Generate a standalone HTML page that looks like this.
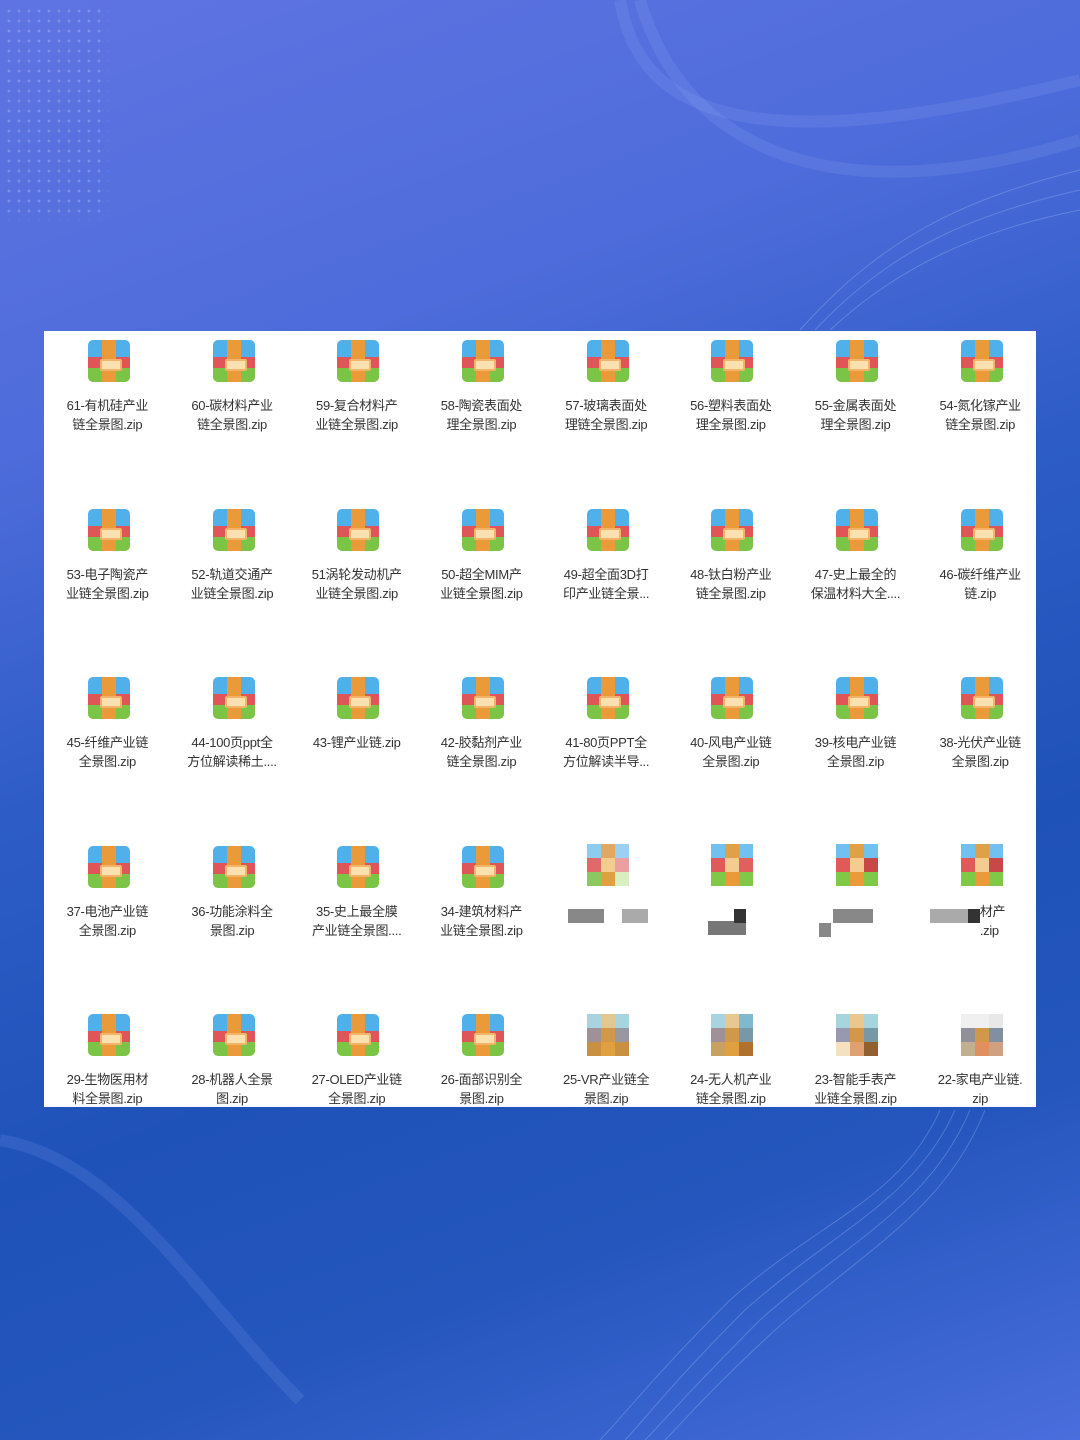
<!DOCTYPE html>
<html><head><meta charset="utf-8">
<style>
*{margin:0;padding:0;box-sizing:border-box}
body{width:1080px;height:1440px;overflow:hidden;position:relative;
background:linear-gradient(160deg,#5f74e2 0%,#4e6cdb 25%,#2d5cc6 45%,#1f52b9 65%,#2456bd 80%,#4a6edd 100%);
font-family:"Liberation Sans","Noto Sans CJK SC",sans-serif}
.dots{position:absolute;left:4px;top:6px;width:104px;height:214px;
background-image:radial-gradient(circle,rgba(255,255,255,.22) 1.2px,transparent 1.6px);background-size:10px 10px}
.panel{position:absolute;left:44px;top:331px;width:992px;height:776px;background:#fff;overflow:hidden;
display:grid;grid-template-columns:repeat(8,124.7px);grid-auto-rows:168.5px;padding-left:1px}
.c{position:relative;text-align:center}
.i{position:absolute;left:43px;top:9px;width:42px;height:42px;border-radius:5px;overflow:hidden;
background:linear-gradient(#4fb0ea 0,#4fb0ea 40%,#e05658 40%,#e05658 67%,#7cc446 67%)}
.i:before{content:"";position:absolute;left:14px;top:0;width:14px;height:42px;background:#eb9a3a}
.i:after{content:"";position:absolute;left:12px;top:19px;width:18px;height:8px;background:#fbe0b0;border:2px solid #f3b46a;border-radius:2px}
.t{position:absolute;left:-10px;right:-10px;top:65px;font-size:13px;line-height:19px;color:#333;letter-spacing:-.3px;white-space:nowrap}
.m{position:absolute;left:43px;top:7px;width:42px;height:42px;display:grid;grid-template-columns:repeat(3,14px)}
.m b{display:block}
.bl{position:absolute;top:72px;height:14px;background:#777}
svg.w{position:absolute;left:0;top:0}
</style></head><body>
<svg class="w" width="1080" height="1440" viewBox="0 0 1080 1440" fill="none">
<g stroke="rgba(170,200,255,.12)" stroke-width="12">
<path d="M620 0 C640 120 760 160 1080 80"/>
<path d="M640 0 C680 140 820 220 1080 140"/>
<path d="M0 1140 C120 1160 200 1300 300 1400"/>
</g>
<g stroke="rgba(200,220,255,.25)" stroke-width="1">
<path d="M800 330 C880 240 960 200 1080 170"/><path d="M815 330 C890 250 970 215 1080 190"/>
<path d="M830 330 C900 265 980 230 1080 210"/>
<path d="M940 1110 C900 1200 820 1220 730 1300 C650 1380 620 1420 600 1440"/>
<path d="M955 1110 C915 1200 835 1230 745 1310 C670 1385 640 1425 625 1440"/>
<path d="M970 1110 C930 1205 850 1240 760 1320 C690 1390 660 1425 645 1440"/>
<path d="M985 1110 C945 1210 865 1250 775 1330 C705 1395 680 1425 665 1440"/>
</g>
</svg>
<div class="dots"></div>
<div class="panel">
<div class="c"><div class="i"></div><div class="t">61-有机硅产业<br>链全景图.zip</div></div>
<div class="c"><div class="i"></div><div class="t">60-碳材料产业<br>链全景图.zip</div></div>
<div class="c"><div class="i"></div><div class="t">59-复合材料产<br>业链全景图.zip</div></div>
<div class="c"><div class="i"></div><div class="t">58-陶瓷表面处<br>理全景图.zip</div></div>
<div class="c"><div class="i"></div><div class="t">57-玻璃表面处<br>理链全景图.zip</div></div>
<div class="c"><div class="i"></div><div class="t">56-塑料表面处<br>理全景图.zip</div></div>
<div class="c"><div class="i"></div><div class="t">55-金属表面处<br>理全景图.zip</div></div>
<div class="c"><div class="i"></div><div class="t">54-氮化镓产业<br>链全景图.zip</div></div>

<div class="c"><div class="i"></div><div class="t">53-电子陶瓷产<br>业链全景图.zip</div></div>
<div class="c"><div class="i"></div><div class="t">52-轨道交通产<br>业链全景图.zip</div></div>
<div class="c"><div class="i"></div><div class="t">51涡轮发动机产<br>业链全景图.zip</div></div>
<div class="c"><div class="i"></div><div class="t">50-超全MIM产<br>业链全景图.zip</div></div>
<div class="c"><div class="i"></div><div class="t">49-超全面3D打<br>印产业链全景...</div></div>
<div class="c"><div class="i"></div><div class="t">48-钛白粉产业<br>链全景图.zip</div></div>
<div class="c"><div class="i"></div><div class="t">47-史上最全的<br>保温材料大全....</div></div>
<div class="c"><div class="i"></div><div class="t">46-碳纤维产业<br>链.zip</div></div>

<div class="c"><div class="i"></div><div class="t">45-纤维产业链<br>全景图.zip</div></div>
<div class="c"><div class="i"></div><div class="t">44-100页ppt全<br>方位解读稀土....</div></div>
<div class="c"><div class="i"></div><div class="t">43-锂产业链.zip</div></div>
<div class="c"><div class="i"></div><div class="t">42-胶黏剂产业<br>链全景图.zip</div></div>
<div class="c"><div class="i"></div><div class="t">41-80页PPT全<br>方位解读半导...</div></div>
<div class="c"><div class="i"></div><div class="t">40-风电产业链<br>全景图.zip</div></div>
<div class="c"><div class="i"></div><div class="t">39-核电产业链<br>全景图.zip</div></div>
<div class="c"><div class="i"></div><div class="t">38-光伏产业链<br>全景图.zip</div></div>

<div class="c"><div class="i"></div><div class="t">37-电池产业链<br>全景图.zip</div></div>
<div class="c"><div class="i"></div><div class="t">36-功能涂料全<br>景图.zip</div></div>
<div class="c"><div class="i"></div><div class="t">35-史上最全膜<br>产业链全景图....</div></div>
<div class="c"><div class="i"></div><div class="t">34-建筑材料产<br>业链全景图.zip</div></div>
<div class="c"><div class="m"><b style="background:#8cccf0"></b><b style="background:#e0a860"></b><b style="background:#9cd0f0"></b><b style="background:#e06a6a"></b><b style="background:#f5cc90"></b><b style="background:#eaa0a0"></b><b style="background:#8cc860"></b><b style="background:#e0a040"></b><b style="background:#d8f0c0"></b></div>
<div class="bl" style="left:24px;width:36px;background:#888"></div><div class="bl" style="left:78px;width:26px;background:#aaa"></div></div>
<div class="c"><div class="m"><b style="background:#70c0f0"></b><b style="background:#e0a048"></b><b style="background:#70c0f0"></b><b style="background:#e05a5a"></b><b style="background:#f5cc90"></b><b style="background:#e06060"></b><b style="background:#80c848"></b><b style="background:#eb9a3a"></b><b style="background:#80c848"></b></div>
<div class="bl" style="left:40px;width:38px;top:84px;background:#777"></div><div class="bl" style="left:66px;width:12px;background:#333"></div></div>
<div class="c"><div class="m"><b style="background:#70c0f0"></b><b style="background:#e0a048"></b><b style="background:#70c0f0"></b><b style="background:#e05a5a"></b><b style="background:#f5cc90"></b><b style="background:#c84848"></b><b style="background:#80c848"></b><b style="background:#eb9a3a"></b><b style="background:#80c848"></b></div>
<div class="bl" style="left:40px;width:40px;background:#888"></div><div class="bl" style="left:26px;width:12px;top:86px;background:#888"></div></div>
<div class="c"><div class="m"><b style="background:#70c0f0"></b><b style="background:#e0a048"></b><b style="background:#70c0f0"></b><b style="background:#e05a5a"></b><b style="background:#f5cc90"></b><b style="background:#c84848"></b><b style="background:#80c848"></b><b style="background:#eb9a3a"></b><b style="background:#80c848"></b></div>
<div class="bl" style="left:12px;width:38px;background:#aaa"></div><div class="bl" style="left:50px;width:12px;background:#333"></div><div class="t" style="left:62px;right:0;text-align:left">材产<br>.zip</div></div>

<div class="c"><div class="i"></div><div class="t">29-生物医用材<br>料全景图.zip</div></div>
<div class="c"><div class="i"></div><div class="t">28-机器人全景<br>图.zip</div></div>
<div class="c"><div class="i"></div><div class="t">27-OLED产业链<br>全景图.zip</div></div>
<div class="c"><div class="i"></div><div class="t">26-面部识别全<br>景图.zip</div></div>
<div class="c"><div class="m" style="top:9px"><b style="background:#a8d4e0"></b><b style="background:#e0c890"></b><b style="background:#a8d4e0"></b><b style="background:#a09098"></b><b style="background:#d09848"></b><b style="background:#9898a0"></b><b style="background:#c89040"></b><b style="background:#e0a040"></b><b style="background:#c89040"></b></div><div class="t">25-VR产业链全<br>景图.zip</div></div>
<div class="c"><div class="m" style="top:9px"><b style="background:#a8d4e0"></b><b style="background:#e8c890"></b><b style="background:#80b8d0"></b><b style="background:#a09098"></b><b style="background:#d09848"></b><b style="background:#7898a8"></b><b style="background:#c8a060"></b><b style="background:#e0a040"></b><b style="background:#b07030"></b></div><div class="t">24-无人机产业<br>链全景图.zip</div></div>
<div class="c"><div class="m" style="top:9px"><b style="background:#a8d4e0"></b><b style="background:#e8c890"></b><b style="background:#a8d4e0"></b><b style="background:#9898b0"></b><b style="background:#d09848"></b><b style="background:#7898a8"></b><b style="background:#f5e0c0"></b><b style="background:#e0a070"></b><b style="background:#906030"></b></div><div class="t">23-智能手表产<br>业链全景图.zip</div></div>
<div class="c"><div class="m" style="top:9px"><b style="background:#f0f0f0"></b><b style="background:#f0f0f0"></b><b style="background:#e8e8e8"></b><b style="background:#909098"></b><b style="background:#d09848"></b><b style="background:#8090a0"></b><b style="background:#c0b090"></b><b style="background:#e09060"></b><b style="background:#d0a080"></b></div><div class="t">22-家电产业链.<br>zip</div></div>
</div>
</body></html>
